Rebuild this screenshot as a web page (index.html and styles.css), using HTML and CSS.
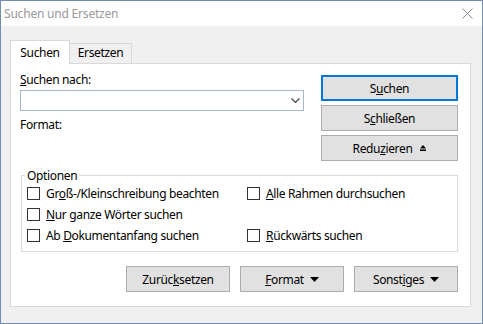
FILE: index.html
```html
<!DOCTYPE html>
<html lang="de">
<head>
<meta charset="utf-8">
<title>Suchen und Ersetzen</title>
<link rel="stylesheet" href="styles.css">
</head>
<body>
<div class="window">
  <div class="titlebar">
    <span class="title">Suchen und Ersetzen</span>
    <svg class="close" width="11" height="11" viewBox="0 0 11 11"><path d="M0.5 0.5 L10.5 10.5 M10.5 0.5 L0.5 10.5" stroke="#8a8a8a" stroke-width="1" fill="none"/></svg>
  </div>
  <div class="client">
    <div class="tabs">
      <div class="tab active">Suchen</div>
      <div class="tab">Ersetzen</div>
    </div>
    <div class="panel">
      <div class="top">
        <div class="left">
          <div class="label"><u>S</u>uchen nach:</div>
          <div class="combo">
            <svg class="chev" width="9" height="5" viewBox="0 0 9 5"><path d="M0.5 0.5 L4.5 4.5 L8.5 0.5" stroke="#3c3c3c" stroke-width="1.1" fill="none"/></svg>
          </div>
          <div class="label format">Format:</div>
        </div>
        <div class="actions">
          <button class="btn default">S<u>u</u>chen</button>
          <button class="btn">S<u>c</u>hließen</button>
          <button class="btn">Redu<u>z</u>ieren <svg class="eject" width="6" height="6" viewBox="0 0 6 6"><path d="M3 0 L6 3.5 L0 3.5 Z" fill="#000"/><rect x="0" y="4.5" width="6" height="1.5" fill="#000"/></svg></button>
        </div>
      </div>
      <fieldset class="options">
        <legend>Optionen</legend>
        <div class="grid">
          <label class="check"><span class="box"></span><span>Gr<u>o</u>ß-/Kleinschreibung beachten</span></label>
          <label class="check"><span class="box"></span><span><u>A</u>lle Rahmen durchsuchen</span></label>
          <label class="check"><span class="box"></span><span><u>N</u>ur ganze Wörter suchen</span></label>
          <span></span>
          <label class="check"><span class="box"></span><span>Ab <u>D</u>okumentanfang suchen</span></label>
          <label class="check"><span class="box"></span><span><u>R</u>ückwärts suchen</span></label>
        </div>
      </fieldset>
      <div class="bottom">
        <button class="btn wide">Zurüc<u>k</u>setzen</button>
        <button class="btn wide"><u>F</u>ormat <svg class="down" width="9" height="5" viewBox="0 0 9 5"><path d="M0 0 L9 0 L4.5 5 Z" fill="#000"/></svg></button>
        <button class="btn wide">Sonst<u>i</u>ges <svg class="down" width="9" height="5" viewBox="0 0 9 5"><path d="M0 0 L9 0 L4.5 5 Z" fill="#000"/></svg></button>
      </div>
    </div>
  </div>
</div>
</body>
</html>
```
FILE: styles.css
```css
* { box-sizing: border-box; }
html, body { margin: 0; padding: 0; }
body {
  font-family: "Noto Sans", "Open Sans", sans-serif;
  font-size: 12px;
  line-height: 15px;
  color: #000;
  background: #fff;
}
.window {
  width: 483px;
  height: 324px;
  border: 1px solid #6f8eb0;
  display: flex;
  flex-direction: column;
}
.titlebar {
  height: 25px;
  background: #fff;
  display: flex;
  align-items: center;
  padding-left: 3px;
  flex: none;
}
.title { color: #999; flex: 1; letter-spacing: -0.2px; }
.close { align-self: flex-start; margin-top: 7px; margin-right: 9px; }
.client {
  flex: 1;
  background: #f0f0f0;
  padding: 14px 11px 0 9px;
  display: flex;
  flex-direction: column;
  letter-spacing: -0.35px;
}
.tabs {
  display: flex;
  align-items: flex-end;
  height: 23px;
}
.tab {
  height: 20px;
  width: 62px;
  border-top: 1px solid #d9d9d9;
  border-right: 1px solid #d9d9d9;
  padding-top: 1px;
  text-align: center;
}
.tab.active {
  width: 60px;
  height: 24px;
  margin-bottom: -1px;
  background: #fff;
  border: 1px solid #d9d9d9;
  border-bottom: none;
  padding-top: 4px;
  position: relative;
  z-index: 1;
}
.panel {
  background: #fff;
  border: 1px solid #d9d9d9;
  padding: 8px 12px 14px 9px;
}
.top {
  display: flex;
  justify-content: space-between;
  align-items: flex-start;
}
.left { width: 284px; }
.combo {
  margin-top: 3px;
  height: 21px;
  border: 1px solid #a7b6cb;
  background: #fff;
  display: flex;
  align-items: center;
  justify-content: flex-end;
  padding-right: 3px;
}
.format { margin-top: 6px; }
.actions {
  width: 137px;
  margin-top: 3px;
  display: flex;
  flex-direction: column;
  gap: 4px;
}
.btn {
  font: inherit;
  letter-spacing: inherit;
  color: #000;
  height: 26px;
  background: #e1e1e1;
  border: 1px solid #adadad;
  display: flex;
  align-items: center;
  justify-content: center;
  padding: 0;
  margin: 0;
}
.btn.default { border: 2px solid #0078d7; }
.eject { margin-left: 8px; }
.down { margin-left: 6px; }
.options {
  margin: 7px 0 0 1px;
  width: 437px;
  border: 1px solid #dcdcdc;
  padding: 0 0 6px 5px;
  min-inline-size: 0;
}
.options legend {
  padding: 0 2px;
  margin-left: -2px;
  line-height: 15px;
}
.grid {
  display: grid;
  grid-template-columns: 220px 1fr;
  grid-template-rows: 21px 21px 20px;
}
.check {
  display: flex;
  align-items: center;
  gap: 6px;
}
.box {
  width: 13px;
  height: 13px;
  border: 1px solid #333;
  background: #fff;
  flex: none;
}
.bottom {
  margin-top: 14px;
  display: flex;
  justify-content: flex-end;
  gap: 10px;
}
.btn.wide { width: 104px; }
```
